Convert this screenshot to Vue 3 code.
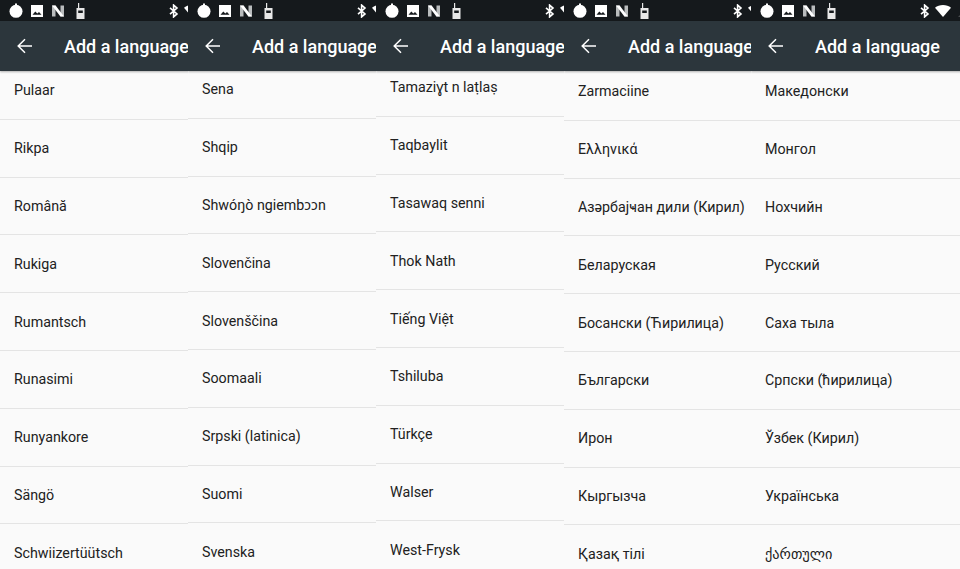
<script setup>
// each panel is one phone screenshot, scrolled a little differently
const panels = [
  {
    offset: 'p1',
    rows: ['Pulaar', 'Rikpa', 'Română', 'Rukiga', 'Rumantsch', 'Runasimi', 'Runyankore', 'Sängö', 'Schwiizertüütsch'],
  },
  {
    offset: 'p2',
    rows: ['Sena', 'Shqip', 'Shwóŋò ngiembɔɔn', 'Slovenčina', 'Slovenščina', 'Soomaali', 'Srpski (latinica)', 'Suomi', 'Svenska'],
  },
  {
    offset: 'p3',
    rows: ['Tamaziɣt n laṭlaṣ', 'Taqbaylit', 'Tasawaq senni', 'Thok Nath', 'Tiếng Việt', 'Tshiluba', 'Türkçe', 'Walser', 'West-Frysk'],
  },
  {
    offset: 'p4',
    rows: ['Zarmaciine', 'Ελληνικά', 'Азәрбајҹан дили (Кирил)', 'Беларуская', 'Босански (Ћирилица)', 'Български', 'Ирон', 'Кыргызча', 'Қазақ тілі'],
  },
  {
    offset: 'p4',
    rows: ['Македонски', 'Монгол', 'Нохчийн', 'Русский', 'Саха тыла', 'Српски (ћирилица)', 'Ўзбек (Кирил)', 'Українська', 'ქართული'],
  },
]
</script>

<template>
  <div class="screen">
    <section v-for="(panel, i) in panels" :key="i" class="panel">
      <div class="status">
        <svg width="14" height="15" viewBox="0 0 14 15"><circle cx="7" cy="8.300" r="6.500" fill="#fff" /><rect x="6" y="0.500" width="2" height="2.500" fill="#fff" /></svg>
        <svg width="14" height="14" viewBox="0 0 14 14"><path fill="#fff" d="M1 1h12v12H1z" /><path fill="#15191c" d="M2.500 10.800l2.800-3.300 2 2 1.700-1.500 2.500 2.800z" /></svg>
        <svg width="14" height="14" viewBox="0 0 14 14"><path fill="#b9bcbd" d="M1 1.500h3.500v11H1zM9.500 1.500H13v11H9.500z" /><path fill="#fff" d="M1 1.500h3.600l8.400 11H9.400z" /></svg>
        <svg class="walkie" width="9" height="16" viewBox="0 0 9 16"><path fill="#e8e8e8" d="M2 0h1.200v5H8.500v11H.500V5H2z" /><path fill="#15191c" d="M2.200 7.500h4.600v2.500H2.200z" /></svg>
        <span class="spacer"></span>
        <svg width="10" height="14" viewBox="0 0 10 14"><path fill="none" stroke="#fff" stroke-width="1.600" d="M1 3.800l7 6.100-3.400 3V1.100l3.400 3-7 6.100" /></svg>
        <svg class="wifi" width="16" height="12" viewBox="0 0 16 12"><path fill="#fff" d="M0 2.800C2 1 5 0 8 0s6 1 8 2.800L8 12z" /></svg>
        <svg class="signal" width="12" height="12" viewBox="0 0 12 12"><path fill="#4a4d4f" d="M0 12L12 0v12z" /></svg>
      </div>
      <header class="bar">
        <svg width="16" height="16" viewBox="0 0 16 16"><path fill="none" stroke="#fff" stroke-width="1.500" d="M15 8H1.500M8 1.200L1.200 8 8 14.800" /></svg>
        <h1 class="title">Add a language</h1>
      </header>
      <ul class="list" :class="panel.offset">
        <li v-for="row in panel.rows" :key="row" class="row">{{ row }}</li>
      </ul>
    </section>
  </div>
</template>

<style>
html, body {
  margin: 0;
  background: #fafafa;
}
</style>

<style scoped>
.screen {
  display: grid;
  grid-template-columns: 188px 188px 188px 187px 209px;
  width: 960px;
  height: 569px;
  overflow: hidden;
  font-family: Roboto, "Noto Sans", "DejaVu Sans", sans-serif;
}
.panel {
  height: 569px;
  overflow: hidden;
  background: #fafafa;
}
.status {
  display: flex;
  align-items: center;
  gap: 7px;
  width: 225px;
  height: 21px;
  padding-left: 9px;
  box-sizing: border-box;
  background: #15191c;
}
.walkie {
  margin-left: 4px;
}
.spacer {
  width: 70px;
}
.wifi {
  margin-left: -2px;
}
.bar {
  display: flex;
  align-items: center;
  gap: 31px;
  width: 225px;
  height: 50px;
  padding-left: 17px;
  box-sizing: border-box;
  background: #2c363c;
  box-shadow: 0 1px 2px rgba(0, 0, 0, 0.3);
  position: relative;
  z-index: 1;
}
.title {
  margin: 0;
  color: #fff;
  font-size: 18px;
  font-weight: 500;
  white-space: nowrap;
}
.list {
  margin: 0;
  padding: 0;
  list-style: none;
}
/* scroll position of each list */
.p1 { margin-top: -9px; }
.p2 { margin-top: -10px; }
.p3 { margin-top: -12px; }
.p4 { margin-top: -8px; }
.row {
  display: flex;
  align-items: center;
  height: 57.800px;
  box-sizing: border-box;
  padding-left: 14px;
  border-bottom: 1px solid #e4e4e4;
  color: #212121;
  font-size: 14.250px;
  line-height: 20px;
  white-space: nowrap;
}
</style>
